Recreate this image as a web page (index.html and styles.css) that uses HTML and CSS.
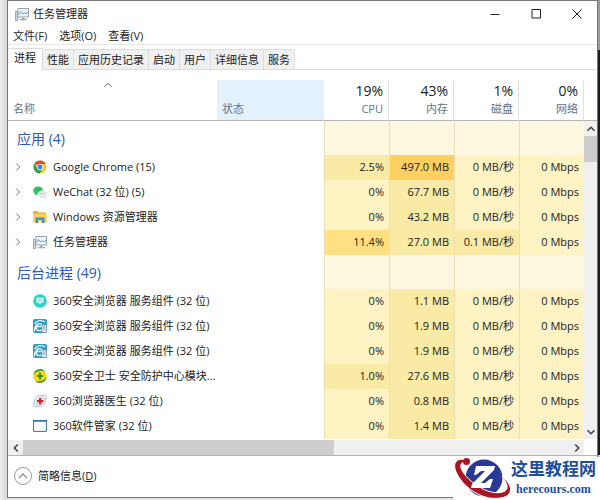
FILE: index.html
```html
<!DOCTYPE html>
<html lang="zh-CN">
<head>
    <meta charset="UTF-8">
    <meta name="viewport" content="width=device-width, initial-scale=1.0">
    <title>任务管理器</title>
    <link rel="stylesheet" href="styles.css">
</head>
<body>
    <svg class="defs" aria-hidden="true">
        <symbol id="icon-taskmgr" viewBox="0 0 14 14">
            <path d="M.5 4.500h2v9h-2z" fill="#d6d9dc" stroke="#8b9299" stroke-width=".8"/>
            <path d="M2.800 1.500h10.700v8.500H2.800z" fill="#eaf5fb" stroke="#8f979d" stroke-width=".9"/>
            <path d="M3.500 7.500L5.500 4.500 7.800 7 9.500 5.500 11 7 13 5" fill="none" stroke="#3fa0cf" stroke-width=".9"/>
            <path d="M7 10.500h2.500V12H12v1.200H4.500V12H7z" fill="#a0a8ae"/>
        </symbol>
        <symbol id="icon-chrome" viewBox="0 0 14 14">
            <circle cx="7" cy="7" r="6.500" fill="#f6c62d"/>
            <path d="M7 7L1.400 3.700A6.500 6.500 0 0 1 12.700 4L7 4z" fill="#dd4b3a"/>
            <path d="M1.400 3.700A6.500 6.500 0 0 0 6.600 13.500L9.600 8.500 7 7 4.400 8.500z" fill="#2f9e56"/>
            <circle cx="7" cy="7" r="3.100" fill="#fff"/>
            <circle cx="7" cy="7" r="2.400" fill="#3f7fe8"/>
        </symbol>
        <symbol id="icon-wechat" viewBox="0 0 14 14">
            <path d="M5.200 1.500C2.300 1.500.2 3.300.2 5.600c0 1.300.7 2.400 1.800 3.100L1.600 10.400l1.900-1c.6.200 1.100.2 1.700.2 2.800 0 5-1.800 5-4s-2.200-4.100-5-4.100z" fill="#2fc765"/>
            <path d="M9.300 5.600c-2.500 0-4.300 1.500-4.300 3.500s1.900 3.500 4.300 3.500c.5 0 1-.1 1.500-.2l1.600.8-.4-1.400c1-.6 1.600-1.600 1.600-2.700 0-2-1.900-3.500-4.300-3.500z" fill="#e6ece7" stroke="#c9d6cc" stroke-width=".5"/>
            <g fill="#1b7a3c"><circle cx="3.500" cy="4.500" r=".6"/><circle cx="6.800" cy="4.500" r=".6"/></g>
            <g fill="#7c8a80"><circle cx="8" cy="8.300" r=".5"/><circle cx="10.700" cy="8.300" r=".5"/></g>
        </symbol>
        <symbol id="icon-explorer" viewBox="0 0 14 14">
            <path d="M0 1h5l1 1.500h7V5H0z" fill="#e9b53a"/>
            <path d="M0 4h14v8.500H0z" fill="#fbd560"/>
            <path d="M2.500 13V7.500h9V13H9V10H5v3z" fill="#3d87cc"/>
            <path d="M2.500 7h9v1.500h-9z" fill="#62aee8"/>
        </symbol>
        <symbol id="icon-service" viewBox="0 0 14 14">
            <circle cx="7" cy="7" r="6.800" fill="#2bd3c5"/>
            <path d="M3.500 3.800h7v5H8.200L7 10.500 5.800 8.800H3.500z" fill="#d9fbf6"/>
            <path d="M4.800 5.500h4.400M4.800 7.100h4.400" stroke="#5cd8cd" stroke-width=".7"/>
        </symbol>
        <symbol id="icon-browser" viewBox="0 0 14 14">
            <rect width="14" height="14" rx="2" fill="#2a9ac8"/>
            <path d="M1.500 5C4 .8 9 .8 11.800 3M3 7.500h6.200C9 3.500 3.500 4 3 7.700c-.4 3.800 4 5 6 3M1.500 12.500C1 9 3 6.500 5 5.500" fill="none" stroke="#e9f8ff" stroke-width="1.300"/>
            <path d="M9 6h4.500v7.500H9z" fill="#e5edf2" stroke="#72889b" stroke-width=".6"/>
            <path d="M10 8h2.500M10 10h2.500" stroke="#72889b" stroke-width=".8"/>
        </symbol>
        <symbol id="icon-guard" viewBox="0 0 14 14">
            <circle cx="7" cy="7" r="6.800" fill="#f5d818"/>
            <path d="M.3 6A6.800 6.800 0 0 1 12 2.300C8 1 3.500 2 .3 6zM13.700 8A6.800 6.800 0 0 1 2 11.700C6 13 10.500 12 13.700 8z" fill="#3c9f2a"/>
            <path d="M7 3.800v6.400M3.800 7h6.400" stroke="#247d22" stroke-width="1.700"/>
        </symbol>
        <symbol id="icon-doctor" viewBox="0 0 14 14">
            <ellipse cx="7" cy="7" rx="8" ry="4" fill="#e7f1f7" stroke="#a9c1d0" stroke-width=".7" transform="rotate(-40 7 7)"/>
            <circle cx="7" cy="7" r="5.600" fill="#dce8ef" stroke="#b2c5d1" stroke-width=".7"/>
            <path d="M7.200 4v6.400M4 7.200h6.400" stroke="#cf2433" stroke-width="2.300"/>
        </symbol>
        <symbol id="icon-window" viewBox="0 0 14 14">
            <path d="M.6 1.600h12.800v10.800H.6z" fill="#fff" stroke="#3d6cab" stroke-width="1"/>
            <path d="M0 1h14v1.700H0z" fill="#3272b8"/>
        </symbol>
        <symbol id="icon-up" viewBox="0 0 10 10">
            <path d="M1.500 6.800L5 3.300 8.500 6.800" fill="none" stroke="currentColor" stroke-width="var(--stroke, 1)"/>
        </symbol>
        <symbol id="icon-down" viewBox="0 0 10 10">
            <path d="M1.500 3.200L5 6.700 8.500 3.200" fill="none" stroke="currentColor" stroke-width="var(--stroke, 1)"/>
        </symbol>
        <symbol id="icon-left" viewBox="0 0 10 10">
            <path d="M6.800 1.500L3.300 5 6.800 8.500" fill="none" stroke="currentColor" stroke-width="var(--stroke, 1)"/>
        </symbol>
        <symbol id="icon-right" viewBox="0 0 10 10">
            <path d="M3.200 1.500L6.700 5 3.200 8.500" fill="none" stroke="currentColor" stroke-width="var(--stroke, 1)"/>
        </symbol>
    </svg>

    <div class="window">
        <header class="titlebar">
            <svg class="app-icon"><use href="#icon-taskmgr"/></svg>
            <h1>任务管理器</h1>
            <div class="window-buttons">
                <button aria-label="最小化"><svg viewBox="0 0 10 10"><path d="M.5 5.500h9"/></svg></button>
                <button aria-label="最大化"><svg viewBox="0 0 10 10"><path d="M1 .5h8.500v8.500H1z"/></svg></button>
                <button aria-label="关闭"><svg viewBox="0 0 10 10"><path d="M.5.500l9 9M9.500.500l-9 9"/></svg></button>
            </div>
        </header>

        <nav class="menu">
            <button>文件(F)</button>
            <button>选项(O)</button>
            <button>查看(V)</button>
        </nav>

        <div class="tabs" role="tablist">
            <button class="tab active" role="tab" aria-selected="true">进程</button>
            <button class="tab" role="tab">性能</button>
            <button class="tab" role="tab">应用历史记录</button>
            <button class="tab" role="tab">启动</button>
            <button class="tab" role="tab">用户</button>
            <button class="tab" role="tab">详细信息</button>
            <button class="tab" role="tab">服务</button>
        </div>

        <main class="list">
            <table class="processes">
                <thead>
                    <tr>
                        <th class="col-name" scope="col"><svg class="sort"><use href="#icon-up"/></svg>名称</th>
                        <th class="col-status" scope="col">状态</th>
                        <th class="col-usage" scope="col"><strong>19%</strong>CPU</th>
                        <th class="col-usage" scope="col"><strong>43%</strong>内存</th>
                        <th class="col-usage" scope="col"><strong>1%</strong>磁盘</th>
                        <th class="col-usage" scope="col"><strong>0%</strong>网络</th>
                    </tr>
                </thead>
                <tbody>
                    <tr class="group"><th colspan="2" scope="rowgroup">应用 (4)</th><td></td><td></td><td></td><td></td></tr>
                    <tr>
                        <th scope="row"><div class="process"><button class="expand" aria-label="展开"><svg><use href="#icon-right"/></svg></button><svg class="app-icon"><use href="#icon-chrome"/></svg>Google Chrome (15)</div></th>
                        <td></td><td class="low">2.5%</td><td class="high">497.0 MB</td><td>0 MB/秒</td><td>0 Mbps</td>
                    </tr>
                    <tr>
                        <th scope="row"><div class="process"><button class="expand" aria-label="展开"><svg><use href="#icon-right"/></svg></button><svg class="app-icon"><use href="#icon-wechat"/></svg>WeChat (32 位) (5)</div></th>
                        <td></td><td>0%</td><td class="low">67.7 MB</td><td>0 MB/秒</td><td>0 Mbps</td>
                    </tr>
                    <tr>
                        <th scope="row"><div class="process"><button class="expand" aria-label="展开"><svg><use href="#icon-right"/></svg></button><svg class="app-icon"><use href="#icon-explorer"/></svg>Windows 资源管理器</div></th>
                        <td></td><td>0%</td><td class="low">43.2 MB</td><td>0 MB/秒</td><td>0 Mbps</td>
                    </tr>
                    <tr>
                        <th scope="row"><div class="process"><button class="expand" aria-label="展开"><svg><use href="#icon-right"/></svg></button><svg class="app-icon"><use href="#icon-taskmgr"/></svg>任务管理器</div></th>
                        <td></td><td class="medium">11.4%</td><td class="low">27.0 MB</td><td class="low">0.1 MB/秒</td><td>0 Mbps</td>
                    </tr>
                </tbody>
                <tbody>
                    <tr class="group"><th colspan="2" scope="rowgroup">后台进程 (49)</th><td></td><td></td><td></td><td></td></tr>
                    <tr>
                        <th scope="row"><div class="process child"><svg class="app-icon"><use href="#icon-service"/></svg>360安全浏览器 服务组件 (32 位)</div></th>
                        <td></td><td>0%</td><td class="low">1.1 MB</td><td>0 MB/秒</td><td>0 Mbps</td>
                    </tr>
                    <tr>
                        <th scope="row"><div class="process child"><svg class="app-icon"><use href="#icon-browser"/></svg>360安全浏览器 服务组件 (32 位)</div></th>
                        <td></td><td>0%</td><td class="low">1.9 MB</td><td>0 MB/秒</td><td>0 Mbps</td>
                    </tr>
                    <tr>
                        <th scope="row"><div class="process child"><svg class="app-icon"><use href="#icon-browser"/></svg>360安全浏览器 服务组件 (32 位)</div></th>
                        <td></td><td>0%</td><td class="low">1.9 MB</td><td>0 MB/秒</td><td>0 Mbps</td>
                    </tr>
                    <tr>
                        <th scope="row"><div class="process child"><svg class="app-icon"><use href="#icon-guard"/></svg>360安全卫士 安全防护中心模块...</div></th>
                        <td></td><td class="low">1.0%</td><td class="low">27.6 MB</td><td>0 MB/秒</td><td>0 Mbps</td>
                    </tr>
                    <tr>
                        <th scope="row"><div class="process child"><svg class="app-icon"><use href="#icon-doctor"/></svg>360浏览器医生 (32 位)</div></th>
                        <td></td><td>0%</td><td class="low">0.8 MB</td><td>0 MB/秒</td><td>0 Mbps</td>
                    </tr>
                    <tr>
                        <th scope="row"><div class="process child"><svg class="app-icon"><use href="#icon-window"/></svg>360软件管家 (32 位)</div></th>
                        <td></td><td>0%</td><td class="low">1.4 MB</td><td>0 MB/秒</td><td>0 Mbps</td>
                    </tr>
                </tbody>
            </table>
            <div class="side">
                <div class="side-head"></div>
                <div class="scroll vertical">
                    <button aria-label="向上滚动"><svg><use href="#icon-up"/></svg></button>
                    <div class="thumb"></div>
                    <button class="end" aria-label="向下滚动"><svg><use href="#icon-down"/></svg></button>
                </div>
            </div>
        </main>

        <div class="scroll horizontal">
            <button aria-label="向左滚动"><svg><use href="#icon-left"/></svg></button>
            <div class="thumb"></div>
            <button class="end" aria-label="向右滚动"><svg><use href="#icon-right"/></svg></button>
        </div>

        <footer class="footer">
            <button class="details"><span class="circle"><svg><use href="#icon-up"/></svg></span><span>简略信息(<u>D</u>)</span></button>
        </footer>
    </div>

    <div class="watermark">
        <svg class="logo" viewBox="0 0 58 42" aria-hidden="true">
            <circle cx="31" cy="21" r="18.500" fill="#2a3a94"/>
            <path d="M13 3C4 0-1 6 3 15c6 13 19 23 33 26 9 1 17 0 20-4 4-5 0-12-7-18 5 7 7 12 3 15-5 3-14 2-22-2C19 26 11 19 8 11 7 7 9 5 13 5z" fill="#a91521" stroke="#fff" stroke-width="1"/>
            <circle cx="13.500" cy="4.500" r="3.500" fill="#a91521"/>
            <path d="M23 9h19l-1 4-13 13h4l5-4h3l-3 9H18l1-4 13-13h-4l-5 4h-2z" fill="#fff"/>
        </svg>
        <div class="site">
            <span class="site-name">这里教程网</span>
            <span class="site-url">herecours.com</span>
        </div>
    </div>
</body>
</html>
```

FILE: styles.css
```css
* {
    box-sizing: border-box;
}
body {
    margin: 0;
    padding: 0 2px 2px 7px;
    font-family: "Open Sans", "Noto Sans CJK SC", sans-serif;
    font-size: 11px;
    line-height: 16px;
    color: #222;
    background: linear-gradient(#999 50px, #1c1c1c 50px, #1c1c1c 455px, #ccc 455px) right top / 2px 100% no-repeat,
        linear-gradient(to right, #f0f0f0, #d6d6d6 7px, #e4e4e4 7px);
}
button {
    font: inherit;
    color: inherit;
    background: none;
    border: none;
    padding: 0;
}
svg {
    display: block;
    flex: none;
}
h1 {
    margin: 0;
    font-size: 11px;
    font-weight: normal;
}
.defs {
    position: absolute;
    width: 0;
    height: 0;
}
.window {
    background: #fff;
    border: 1px solid #777;
}
.app-icon {
    width: 14px;
    height: 14px;
    overflow: visible;
}

/* Title bar and menu */
.titlebar {
    display: flex;
    align-items: center;
    gap: 4px;
    height: 26px;
    padding-left: 7px;
}
.window-buttons {
    display: flex;
    margin-left: auto;
}
.window-buttons button {
    width: 41px;
    height: 26px;
    display: flex;
    align-items: center;
    justify-content: center;
}
.window-buttons svg {
    width: 10px;
    height: 10px;
    fill: none;
    stroke: #222;
}
.menu {
    display: flex;
    gap: 12px;
    height: 18px;
    padding-left: 5px;
    border-bottom: 1px solid #e8e8e8;
}

/* Tabs */
.tabs {
    display: flex;
    align-items: flex-end;
    height: 25px;
    border-bottom: 1px solid #dcdcdc;
}
.tab {
    height: 20px;
    padding: 0 4px;
    background: #f0f0f0;
    border: 1px solid #dcdcdc;
    border-width: 1px 1px 0 0;
}
.tab.active {
    height: 22px;
    padding: 0 6px 3px;
    margin-bottom: -1px;
    background: #fff;
}

/* Process list */
.list {
    display: flex;
    padding-top: 10px;
}
.processes {
    flex: 1;
    table-layout: fixed;
    border-collapse: separate;
    border-spacing: 0;
}
.processes th {
    font-weight: normal;
    text-align: left;
    padding: 0;
}
.processes thead th {
    height: 41px;
    padding: 0 5px 3px;
    vertical-align: bottom;
    color: #5f7389;
    border-right: 1px solid #e2e2e2;
    border-bottom: 1px solid #b4b4b4;
}
.processes .col-name {
    width: 209px;
    border-right: none;
}
.processes .col-status {
    background: #e3f1fd;
    border-right-color: #e3f1fd;
}
.processes .col-usage {
    width: 65px;
    text-align: right;
}
.col-usage strong {
    display: block;
    font-size: 14px;
    line-height: 20px;
    font-weight: normal;
    color: #222;
}
.sort {
    width: 10px;
    height: 10px;
    margin: 0 90px 11px;
    color: #666;
}
.processes tbody td {
    height: 25px;
    padding: 0 5px 2px;
    text-align: right;
    white-space: nowrap;
    background: #fff3c4;
    border-left: 1px solid #eadfb4;
}
.processes tbody th {
    padding-bottom: 2px;
}
.processes tbody td.low {
    background: #f9eaa6;
}
.processes tbody td.medium {
    background: #ffe183;
}
.processes tbody td.high {
    background: #ffcf62;
}
.processes tbody th + td {
    background: none;
    border-left: none;
}
.processes .group th {
    height: 34px;
    padding: 2px 9px 0;
    font-size: 14px;
    color: #3058b8;
}
.processes .group td,
.processes .group th + td {
    background: #fff8e1;
    border-left: 1px solid #eadfb4;
}
.process {
    display: flex;
    align-items: center;
    gap: 6px;
    padding-left: 5px;
    white-space: nowrap;
}
.process.child {
    padding-left: 25px;
}
.expand {
    width: 14px;
    color: #777;
}
.expand svg {
    width: 10px;
    height: 10px;
}

/* Scroll bars */
.side {
    display: flex;
    flex-direction: column;
    width: 13px;
}
.side-head {
    height: 41px;
    border-bottom: 1px solid #b4b4b4;
}
.scroll {
    display: flex;
    background: #f0f0f0;
    color: #444;
    --stroke: 1.6;
}
.scroll button {
    display: flex;
    align-items: center;
    justify-content: center;
    width: 15px;
    height: 15px;
}
.scroll svg {
    width: 10px;
    height: 10px;
}
.scroll .thumb {
    background: #cdcdcd;
}
.scroll .end {
    margin: auto 0 0 auto;
}
.vertical {
    flex: 1;
    flex-direction: column;
}
.vertical button {
    width: 13px;
}
.vertical .thumb {
    height: 26px;
}
.horizontal {
    margin: 1px 13px 0 0;
}
.horizontal .thumb {
    width: 54%;
}

/* Footer */
.footer {
    padding: 11px 6px 12px;
    border-top: 1px solid #b4b4b4;
}
.details {
    display: flex;
    align-items: center;
    gap: 6px;
}
.circle {
    display: flex;
    align-items: center;
    justify-content: center;
    width: 18px;
    height: 18px;
    border: 1px solid #999;
    border-radius: 50%;
    color: #888;
}
.circle svg {
    width: 12px;
    height: 12px;
}

/* Site badge over the corner */
.watermark {
    position: absolute;
    right: 0;
    bottom: 0;
    display: flex;
    width: 147px;
    height: 43px;
    background: #fff;
}
.logo {
    width: 58px;
    height: 42px;
}
.site {
    display: flex;
    flex-direction: column;
    align-items: center;
    font-family: "Liberation Serif", "Noto Sans CJK SC", serif;
    font-weight: bold;
    color: #1d4f9f;
}
.site-name {
    font-size: 17px;
    line-height: 26px;
}
.site-url {
    font-size: 12px;
    line-height: 12px;
}
```
